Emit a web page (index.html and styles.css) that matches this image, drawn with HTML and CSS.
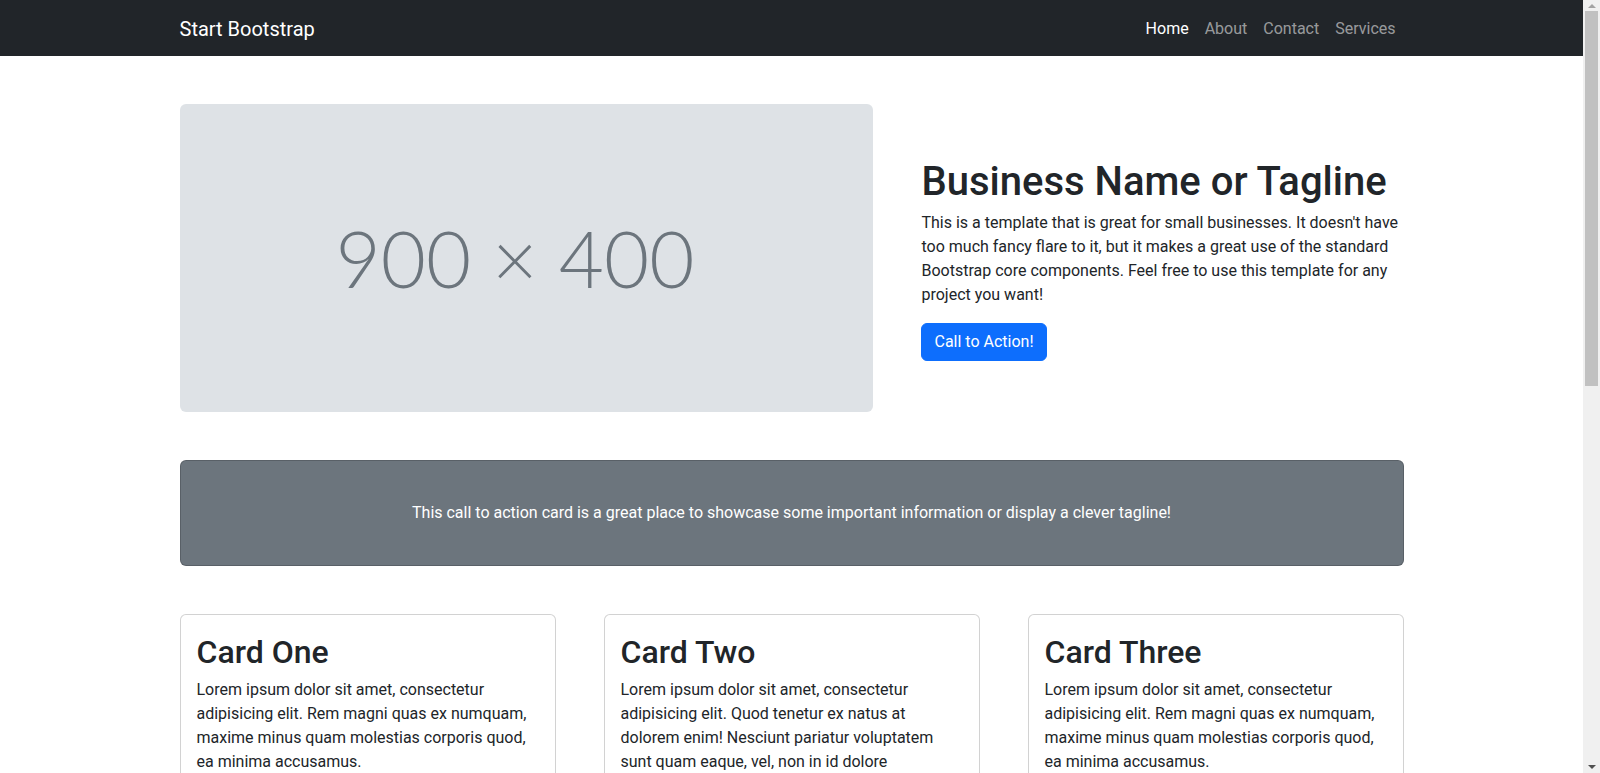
FILE: index.html
```html
<!DOCTYPE html>
<html lang="en">
<head>
<meta charset="utf-8">
<title>Small Business - Start Bootstrap Template</title>
<link rel="stylesheet" href="styles.css">
</head>
<body>
<nav class="navbar">
  <div class="container nav-inner">
    <a class="brand" href="#!">Start Bootstrap</a>
    <ul class="nav-links">
      <li><a class="nav-link active" href="#!">Home</a></li>
      <li><a class="nav-link" href="#!">About</a></li>
      <li><a class="nav-link" href="#!">Contact</a></li>
      <li><a class="nav-link" href="#!">Services</a></li>
    </ul>
  </div>
</nav>
<main class="container">
  <section class="hero">
    <div class="placeholder"><span>900 × 400</span></div>
    <div class="hero-text">
      <h1>Business Name or Tagline</h1>
      <p>This is a template that is great for small businesses. It doesn't have too much fancy flare to it, but it makes a great use of the standard Bootstrap core components. Feel free to use this template for any project you want!</p>
      <a class="btn" href="#!">Call to Action!</a>
    </div>
  </section>
  <div class="callout">
    <p>This call to action card is a great place to showcase some important information or display a clever tagline!</p>
  </div>
  <div class="cards">
    <div class="card">
      <div class="card-body">
        <h2>Card One</h2>
        <p>Lorem ipsum dolor sit amet, consectetur adipisicing elit. Rem magni quas ex numquam, maxime minus quam molestias corporis quod, ea minima accusamus.</p>
      </div>
      <div class="card-footer"><a class="btn btn-sm" href="#!">More Info</a></div>
    </div>
    <div class="card">
      <div class="card-body">
        <h2>Card Two</h2>
        <p>Lorem ipsum dolor sit amet, consectetur adipisicing elit. Quod tenetur ex natus at dolorem enim! Nesciunt pariatur voluptatem sunt quam eaque, vel, non in id dolore voluptates quos eligendi labore.</p>
      </div>
      <div class="card-footer"><a class="btn btn-sm" href="#!">More Info</a></div>
    </div>
    <div class="card">
      <div class="card-body">
        <h2>Card Three</h2>
        <p>Lorem ipsum dolor sit amet, consectetur adipisicing elit. Rem magni quas ex numquam, maxime minus quam molestias corporis quod, ea minima accusamus.</p>
      </div>
      <div class="card-footer"><a class="btn btn-sm" href="#!">More Info</a></div>
    </div>
  </div>
</main>
<footer class="footer">
  <p>Copyright &copy; Your Website 2023</p>
</footer>
<div class="scrollbar" aria-hidden="true">
  <span class="sb-arrow sb-up"></span>
  <span class="sb-thumb"></span>
  <span class="sb-arrow sb-down"></span>
</div>
</body>
</html>
```
FILE: styles.css
```css
*, *::before, *::after { box-sizing: border-box; }

body {
  margin: 0;
  padding-right: 17px;
  font-family: Roboto, "Liberation Sans", sans-serif;
  font-size: 16px;
  line-height: 1.5;
  color: #212529;
  background: #fff;
}

.container {
  width: 100%;
  max-width: 1320px;
  margin: 0 auto;
  padding: 0 48px;
}

/* navbar */
.navbar {
  background: #212529;
  padding: 8px 0;
}
.nav-inner {
  display: flex;
  align-items: center;
  justify-content: space-between;
}
.brand {
  font-size: 20px;
  line-height: 30px;
  padding: 6px 0 4px;
  color: #fff;
  text-decoration: none;
}
.nav-links {
  display: flex;
  list-style: none;
  margin: 0;
  padding: 0;
}
.nav-link {
  display: block;
  padding: 9px 8px 7px;
  color: rgba(255, 255, 255, 0.55);
  text-decoration: none;
}
.nav-link.active { color: #fff; }

/* hero */
.hero {
  display: grid;
  grid-template-columns: calc(58.3333% - 20px) calc(41.6667% - 28px);
  column-gap: 48px;
  align-items: center;
  margin: 48px 0;
}
.placeholder {
  aspect-ratio: 9 / 4;
  background: #dee2e6;
  border-radius: 6px;
  display: flex;
  align-items: center;
  justify-content: center;
  padding-right: 23px;
}
.placeholder span {
  font-family: Lato, "Open Sans", sans-serif;
  font-weight: 300;
  font-size: 78px;
  line-height: 1;
  color: #6c757d;
}
.hero-text h1 {
  margin: 0 0 5px;
  padding-top: 3px;
  font-size: 40px;
  line-height: 1.2;
  font-weight: 500;
}
.hero-text p {
  margin: 0 0 16px;
}
.btn {
  display: inline-block;
  padding: 6px 12px;
  font-size: 16px;
  line-height: 24px;
  color: #fff;
  background: #0d6efd;
  border: 1px solid #0d6efd;
  border-radius: 6px;
  text-decoration: none;
}
.btn-sm {
  padding: 4px 8px;
  font-size: 14px;
  line-height: 21px;
  border-radius: 4px;
}

/* callout */
.callout {
  background: #6c757d;
  color: #fff;
  border: 1px solid rgba(0, 0, 0, 0.175);
  border-radius: 6px;
  padding: 24px 0;
  margin: 48px 0;
  text-align: center;
}
.callout p {
  margin: 0;
  padding: 16px;
}

/* cards */
.cards {
  display: grid;
  grid-template-columns: repeat(3, 1fr);
  column-gap: 48px;
  margin-bottom: 48px;
}
.card {
  display: flex;
  flex-direction: column;
  border: 1px solid rgba(0, 0, 0, 0.175);
  border-radius: 6px;
  background: #fff;
}
.card-body {
  flex: 1;
  padding: 16px;
}
.card-body h2 {
  margin: 0 0 6px;
  padding-top: 2px;
  font-size: 32px;
  line-height: 1.2;
  font-weight: 500;
}
.card-body p { margin: 0; }
.card-footer {
  padding: 8px 16px;
  background: rgba(0, 0, 0, 0.03);
  border-top: 1px solid rgba(0, 0, 0, 0.175);
  border-radius: 0 0 5px 5px;
}

/* footer */
.footer {
  background: #212529;
  padding: 48px 0;
}
.footer p {
  margin: 0;
  color: #fff;
  text-align: center;
}

/* classic window scrollbar drawn at the right edge */
.scrollbar {
  position: fixed;
  top: 0;
  right: 0;
  width: 17px;
  height: 100vh;
  background: #f0f0f0;
  display: flex;
  flex-direction: column;
  align-items: center;
}
.sb-arrow {
  width: 0;
  height: 0;
}
.sb-up {
  margin-top: 4px;
  border-left: 4px solid transparent;
  border-right: 4px solid transparent;
  border-bottom: 4px solid #a3a3a3;
  flex: 0 0 4px;
  margin-bottom: 3px;
}
.sb-thumb {
  width: 13px;
  height: 375px;
  background: #c1c1c1;
}
.sb-down {
  margin-top: auto;
  margin-bottom: 4px;
  border-left: 4px solid transparent;
  border-right: 4px solid transparent;
  border-top: 4px solid #505050;
  flex: 0 0 4px;
}
```
